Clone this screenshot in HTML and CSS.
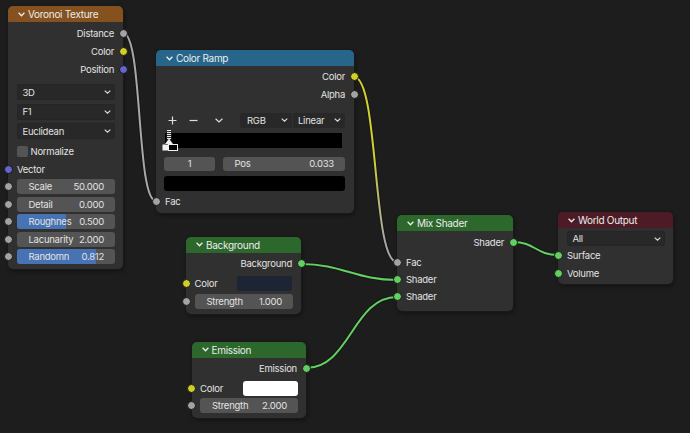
FILE: index.html
```html
<!DOCTYPE html>
<html>
<head>
<meta charset="utf-8">
<link rel="stylesheet" href="styles.css">
</head>
<body>
<div class="canvas">
  <svg class="links" width="690" height="433" viewBox="0 0 690 433">
    <defs>
      <linearGradient id="yg" gradientUnits="userSpaceOnUse" x1="0" y1="150" x2="0" y2="240">
        <stop offset="0" stop-color="#d2d22c"/>
        <stop offset="1" stop-color="#a8a8a8"/>
      </linearGradient>
    </defs>
    <g class="shadow">
      <path d="M123,33 C143,33 136,201 156,201"/>
      <path d="M354,77 C379,77 372,262 397,262"/>
      <path d="M301,264 C342,264 356,280 397,280"/>
      <path d="M306,368 C350,368 353,297 397,297"/>
      <path d="M513,242 C535,242 536,255 558,255"/>
    </g>
    <path class="lk" stroke="#a8a8a8" d="M123,33 C143,33 136,201 156,201"/>
    <path class="lk" stroke="url(#yg)" d="M354,77 C379,77 372,262 397,262"/>
    <path class="lk" stroke="#62d062" d="M301,264 C342,264 356,280 397,280"/>
    <path class="lk" stroke="#62d062" d="M306,368 C350,368 353,297 397,297"/>
    <path class="lk" stroke="#62d062" d="M513,242 C535,242 536,255 558,255"/>
  </svg>

  <!-- Voronoi Texture -->
  <div class="node n-voronoi">
    <div class="hdr h-tex"><svg class="chev" width="7" height="5" viewBox="0 0 7 5"><polyline points="0.6,0.8 3.5,3.8 6.4,0.8"/></svg><span>Voronoi Texture</span></div>
    <div class="body">
      <div class="row out">Distance<i class="sock s-grey"></i></div>
      <div class="row out">Color<i class="sock s-yellow"></i></div>
      <div class="row out">Position<i class="sock s-purple"></i></div>
      <div class="dd first"><span>3D</span><svg class="ddc" width="7" height="4" viewBox="0 0 7 4"><polyline points="0.7,0.6 3.5,3.2 6.3,0.6"/></svg></div>
      <div class="dd"><span>F1</span><svg class="ddc" width="7" height="4" viewBox="0 0 7 4"><polyline points="0.7,0.6 3.5,3.2 6.3,0.6"/></svg></div>
      <div class="dd"><span>Euclidean</span><svg class="ddc" width="7" height="4" viewBox="0 0 7 4"><polyline points="0.7,0.6 3.5,3.2 6.3,0.6"/></svg></div>
      <div class="check"><i class="box"></i><span>Normalize</span></div>
      <div class="row in">Vector<i class="sock s-purple"></i></div>
      <div class="frow f-first"><i class="sock s-grey"></i><div class="field"><span>Scale</span><span>50.000</span></div></div>
      <div class="frow"><i class="sock s-grey"></i><div class="field"><span>Detail</span><span>0.000</span></div></div>
      <div class="frow"><i class="sock s-grey"></i><div class="field"><b class="fill" style="width:50%"></b><span>Roughnes</span><span>0.500</span></div></div>
      <div class="frow"><i class="sock s-grey"></i><div class="field"><span>Lacunarity</span><span>2.000</span></div></div>
      <div class="frow"><i class="sock s-grey"></i><div class="field"><b class="fill" style="width:81.2%"></b><span>Randomn</span><span>0.812</span></div></div>
    </div>
  </div>

  <!-- Color Ramp -->
  <div class="node n-ramp">
    <div class="hdr h-conv"><svg class="chev" width="7" height="5" viewBox="0 0 7 5"><polyline points="0.6,0.8 3.5,3.8 6.4,0.8"/></svg><span>Color Ramp</span></div>
    <div class="body">
      <div class="row out">Color<i class="sock s-yellow"></i></div>
      <div class="row out">Alpha<i class="sock s-grey"></i></div>
      <div class="ctrl">
        <svg class="ic" width="9" height="9" viewBox="0 0 9 9"><path d="M4.5,0.5 V8.5 M0.5,4.5 H8.5"/></svg>
        <svg class="ic minus" width="9" height="9" viewBox="0 0 9 9"><path d="M0.5,4.5 H8.5"/></svg>
        <svg class="ic chv" width="8" height="5" viewBox="0 0 8 5"><polyline points="0.6,0.7 4,4 7.4,0.7"/></svg>
        <div class="ddgroup">
          <div class="dd2 l"><span>RGB</span><svg class="ddc" width="7" height="4" viewBox="0 0 7 4"><polyline points="0.7,0.6 3.5,3.2 6.3,0.6"/></svg></div>
          <div class="dd2 r"><span>Linear</span><svg class="ddc" width="7" height="4" viewBox="0 0 7 4"><polyline points="0.7,0.6 3.5,3.2 6.3,0.6"/></svg></div>
        </div>
      </div>
      <div class="ramp">
        <svg class="marker" width="17" height="21" viewBox="0 0 17 21">
          <rect x="4.5" y="0" width="5" height="10" fill="#2a2a2a"/>
          <path d="M5,0.5 H9 M5,2.5 H9 M5,4.5 H9 M5,6.5 H9 M5,8.5 H9" stroke="#eeeeee" stroke-width="1"/>
          <path d="M7,8.5 L3,14 H11 Z" fill="#eeeeee"/>
          <rect x="0.5" y="14.5" width="6" height="6" fill="#f2f2f2"/>
          <rect x="6.5" y="14.5" width="9" height="6" fill="#000" stroke="#eeeeee" stroke-width="1"/>
        </svg>
      </div>
      <div class="posrow">
        <div class="field fnum"><span>1</span></div>
        <div class="field fpos"><span>Pos</span><span>0.033</span></div>
      </div>
      <div class="blk"></div>
      <div class="row in fac">Fac<i class="sock s-grey"></i></div>
    </div>
  </div>

  <!-- Background -->
  <div class="node n-bg">
    <div class="hdr h-shader"><svg class="chev" width="7" height="5" viewBox="0 0 7 5"><polyline points="0.6,0.8 3.5,3.8 6.4,0.8"/></svg><span>Background</span></div>
    <div class="body">
      <div class="row out">Background<i class="sock s-green"></i></div>
      <div class="frow crow"><i class="sock s-yellow"></i><span class="clabel">Color</span><div class="swatch sw-navy"></div></div>
      <div class="frow"><i class="sock s-grey"></i><div class="field"><span>Strength</span><span>1.000</span></div></div>
    </div>
  </div>

  <!-- Emission -->
  <div class="node n-em">
    <div class="hdr h-shader"><svg class="chev" width="7" height="5" viewBox="0 0 7 5"><polyline points="0.6,0.8 3.5,3.8 6.4,0.8"/></svg><span>Emission</span></div>
    <div class="body">
      <div class="row out">Emission<i class="sock s-green"></i></div>
      <div class="frow crow c-em"><i class="sock s-yellow"></i><span class="clabel">Color</span><div class="swatch sw-white"></div></div>
      <div class="frow"><i class="sock s-grey"></i><div class="field"><span>Strength</span><span>2.000</span></div></div>
    </div>
  </div>

  <!-- Mix Shader -->
  <div class="node n-mix">
    <div class="hdr h-shader"><svg class="chev" width="7" height="5" viewBox="0 0 7 5"><polyline points="0.6,0.8 3.5,3.8 6.4,0.8"/></svg><span>Mix Shader</span></div>
    <div class="body">
      <div class="row out">Shader<i class="sock s-green"></i></div>
      <div class="row in sm first-in">Fac<i class="sock s-grey"></i></div>
      <div class="row in sm">Shader<i class="sock s-green"></i></div>
      <div class="row in sm">Shader<i class="sock s-green"></i></div>
    </div>
  </div>

  <!-- World Output -->
  <div class="node n-world">
    <div class="hdr h-out"><svg class="chev" width="7" height="5" viewBox="0 0 7 5"><polyline points="0.6,0.8 3.5,3.8 6.4,0.8"/></svg><span>World Output</span></div>
    <div class="body">
      <div class="dd wdd"><span>All</span><svg class="ddc" width="7" height="4" viewBox="0 0 7 4"><polyline points="0.7,0.6 3.5,3.2 6.3,0.6"/></svg></div>
      <div class="row in">Surface<i class="sock s-green"></i></div>
      <div class="row in">Volume<i class="sock s-green"></i></div>
    </div>
  </div>
</div>
</body>
</html>
```

FILE: styles.css
```css
* { box-sizing: border-box; margin: 0; padding: 0; }
body {
  margin: 0;
  background: #1d1d1d;
  font-family: Inter, "Noto Sans", sans-serif;
  font-size: 9.5px;
  letter-spacing: -0.25px;
  color: #e2e2e2;
}
.canvas {
  position: relative;
  width: 690px;
  height: 433px;
  overflow: hidden;
  background: #1d1d1d;
}
.links { position: absolute; left: 0; top: 0; }
.links .shadow path { fill: none; stroke: #111; stroke-opacity: 0.55; stroke-width: 4; }
.links .lk { fill: none; stroke-width: 2; }

.node {
  position: absolute;
  background: #303030;
  border-radius: 5px;
  box-shadow: 0 0 0 1px #191919, 1px 2px 4px rgba(0, 0, 0, 0.45);
}
.hdr {
  height: 16px;
  border-radius: 5px 5px 0 0;
  display: flex;
  align-items: center;
  padding-left: 10px;
  gap: 3px;
  color: #ececec;
  font-size: 10px;
  letter-spacing: -0.3px;
  white-space: nowrap;
}
.chev { fill: none; stroke: #ececec; stroke-width: 1.3; }
.h-tex { background: #85521f; }
.h-conv { background: #27658a; }
.h-shader { background: #2c672c; }
.h-out { background: #4c1b25; }

.body { padding-top: 2px; padding-bottom: 5px; }

.row {
  position: relative;
  height: 18px;
  display: flex;
  align-items: center;
  padding: 0 9px;
  white-space: nowrap;
}
.row.out { justify-content: flex-end; }
.sock {
  position: absolute;
  top: 50%;
  width: 9px;
  height: 9px;
  margin-top: -4.5px;
  border-radius: 50%;
  border: 1px solid #161616;
}
.out .sock { right: -4.5px; }
.in .sock, .frow .sock { left: -4.5px; }
.s-grey { background: #a3a3a3; }
.s-yellow { background: #cfcf2a; }
.s-purple { background: #6565cc; }
.s-green { background: #63cf63; }

.dd {
  height: 16px;
  margin: 3.5px 8px 0 8.5px;
  background: #282828;
  border-radius: 3px;
  box-shadow: inset 0 0 0 1px #252525;
  display: flex;
  align-items: center;
  justify-content: space-between;
  padding: 0 4px 0 6px;
}
.dd.first { margin-top: 6px; }
.ddc { fill: none; stroke: #d8d8d8; stroke-width: 1.2; }

.check {
  height: 17px;
  margin-top: 4px;
  display: flex;
  align-items: center;
  padding-left: 9px;
  gap: 2.5px;
}
.box {
  width: 11px;
  height: 11px;
  border-radius: 2px;
  background: #545454;
}

.frow {
  position: relative;
  height: 15px;
  margin-top: 2.6px;
  padding: 0 8px 0 8.5px;
  display: flex;
  align-items: center;
}
.frow.f-first { margin-top: 1px; }
.field {
  position: relative;
  flex: 1;
  height: 100%;
  background: #545454;
  border-radius: 3px;
  overflow: hidden;
  display: flex;
  align-items: center;
  justify-content: space-between;
  padding: 0 11px 0 12px;
  white-space: nowrap;
}
.field span { position: relative; }
.fill {
  position: absolute;
  left: 0;
  top: 0;
  bottom: 0;
  background: #4772b3;
}

/* Voronoi */
.n-voronoi { left: 8px; top: 6px; width: 115px; }

/* Color Ramp */
.n-ramp { left: 156px; top: 50px; width: 198px; }
.n-ramp .body { padding-top: 1.5px; padding-bottom: 3px; }
.ctrl {
  height: 15px;
  margin-top: 9px;
  display: flex;
  align-items: center;
  padding-left: 12px;
}
.ic { fill: none; stroke: #dcdcdc; stroke-width: 1.2; }
.ic.minus { margin-left: 12px; }
.ic.chv { margin-left: 17px; }
.ddgroup { display: flex; margin-left: 17px; gap: 1px; height: 15px; }
.dd2 {
  height: 15px;
  background: #282828;
  display: flex;
  align-items: center;
  justify-content: space-between;
  padding: 0 4px 0 6px;
}
.dd2.l { width: 52px; border-radius: 3px 0 0 3px; padding-left: 7px; }
.dd2.r { width: 52px; border-radius: 0 3px 3px 0; padding-left: 5px; }
.ramp {
  position: relative;
  height: 15.5px;
  margin: 5px 12px 0 9px;
  background: #000;
}
.marker { position: absolute; left: -3.5px; top: -2.5px; }
.posrow {
  height: 14.5px;
  margin-top: 8.5px;
  padding: 0 9px 0 8px;
  display: flex;
  gap: 7.5px;
}
.fnum { flex: 0 0 51px; justify-content: center; padding: 0; }
.fpos { flex: 1; }
.blk {
  height: 15px;
  margin: 5px 9px 0 8px;
  background: #000;
  border-radius: 3px;
}
.row.fac { margin-top: 1px; }

/* Background & Emission */
.n-bg { left: 186px; top: 236.5px; width: 115px; }
.n-em { left: 191.5px; top: 341.5px; width: 114.5px; }
.crow { margin-top: 3.5px; padding-right: 9px; }
.crow.c-em { margin-top: 3px; padding-right: 8.5px; }
.clabel { flex: 1; }
.swatch { width: 55px; height: 15px; border-radius: 3px; }
.sw-navy { background: #1d2434; }
.sw-white { background: #ffffff; }

/* Mix Shader */
.n-mix { left: 397px; top: 215px; width: 116px; }
.row.sm { height: 17.4px; }
.row.first-in { margin-top: 2.5px; }

/* World Output */
.n-world { left: 558px; top: 212.3px; width: 115px; }
.n-world .body { padding-top: 3px; padding-bottom: 2px; }
.wdd { height: 15px; margin: 0 8px 0 8.5px; }
```
